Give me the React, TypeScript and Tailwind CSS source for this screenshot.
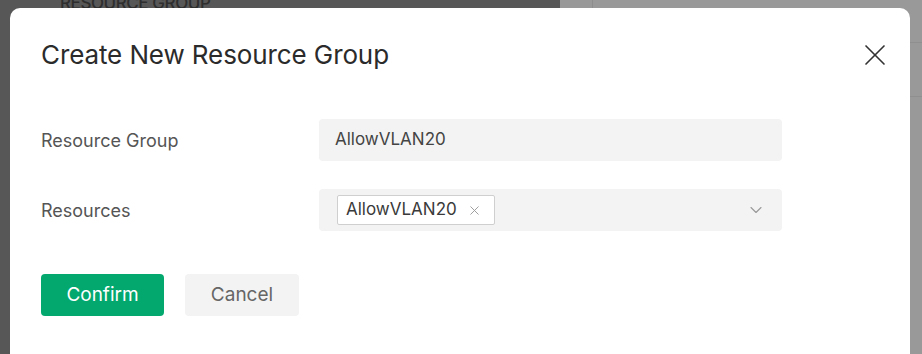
import { X, ChevronDown } from 'lucide-react'

function Backdrop() {
  return (
    <div className="flex h-[354px] w-full">
      <div className="w-[560px] bg-[#575757] pl-[60px]">
        <div className="-mt-[9px] text-[17px] font-medium tracking-tight text-[#2e2e2e]">RESOURCE GROUP</div>
      </div>
      <div className="flex-1 bg-[#999999] flex">
        <div className="w-[33px] border-r border-[#8d8d8d]" />
        <div className="flex-1 flex flex-col">
          <div className="h-[43px] border-b border-[#8f8f8f]" />
          <div className="h-[54px] border-b border-[#8f8f8f]" />
        </div>
      </div>
    </div>
  )
}

export default function App() {
  return (
    <div className="relative h-[354px] w-[922px] overflow-hidden" style={{ fontFamily: 'Inter, "Noto Sans", sans-serif' }}>
      <Backdrop />
      <div className="absolute left-[10px] top-[8px] w-[900px] h-[380px] bg-white rounded-[10px] px-[31px] pt-[29px]">
        <div className="flex items-center justify-between">
          <h2 className="text-[26px] leading-[36px] text-[#2b2b2b] tracking-[-0.1px]">Create New Resource Group</h2>
          <X className="-mr-[14px] text-[#333]" size={36} strokeWidth={1.1} />
        </div>
        <div className="mt-[46px] flex flex-col gap-[28px]">
          <div className="flex items-center">
            <label className="w-[278px] text-[18px] text-[#555]">Resource Group</label>
            <div className="w-[463px] h-[42px] rounded-[4px] bg-[#f3f3f3] flex items-center px-[16px] text-[17px] text-[#444]">
              AllowVLAN20
            </div>
          </div>
          <div className="flex items-center">
            <label className="w-[278px] text-[18px] text-[#555]">Resources</label>
            <div className="w-[463px] h-[42px] rounded-[4px] bg-[#f3f3f3] flex items-center justify-between pl-[18px] pr-[16px]">
              <span className="h-[30px] flex items-center gap-[10px] bg-white border border-[#cfcfcf] rounded-[2px] pl-[8px] pr-[12px] text-[17px] text-[#3a3a3a]">
                AllowVLAN20
                <X size={15} strokeWidth={1.5} className="text-[#999]" />
              </span>
              <ChevronDown size={20} strokeWidth={1.3} className="text-[#999]" />
            </div>
          </div>
        </div>
        <div className="mt-[43px] flex gap-[21px]">
          <button className="w-[123px] h-[42px] rounded-[4px] bg-[#03a86f] text-white text-[19px]">Confirm</button>
          <button className="w-[114px] h-[42px] rounded-[4px] bg-[#f3f3f3] text-[#666] text-[19px]">Cancel</button>
        </div>
      </div>
    </div>
  )
}
